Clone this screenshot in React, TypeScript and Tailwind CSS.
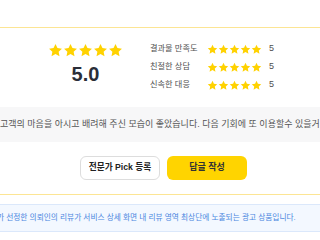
// 리뷰 상세 카드 (별점 요약 + 후기 + 버튼 + 광고 안내)

function Star({ size }: { size: number }) {
  return (
    <svg width={size} height={size} viewBox="0 0 24 24" className="shrink-0">
      <path
        d="M12 1.5l3.1 6.6 7.2.9-5.3 5 1.4 7.1L12 17.6l-6.4 3.5 1.4-7.1-5.3-5 7.2-.9z"
        fill="#FFD200"
      />
    </svg>
  )
}

function Stars({ size, pitch }: { size: number; pitch: number }) {
  return (
    <div className="flex" style={{ gap: pitch - size }}>
      {[0, 1, 2, 3, 4].map((i) => (
        <Star key={i} size={size} />
      ))}
    </div>
  )
}

export default function App() {
  const scores = [
    { label: '결과물 만족도', value: 5 },
    { label: '친절한 상담', value: 5 },
    { label: '신속한 대응', value: 5 },
  ]

  return (
    <div
      className="w-[320px] h-[240px] overflow-hidden bg-white"
      style={{ fontFamily: "'Liberation Sans', 'Noto Sans CJK KR', sans-serif" }}
    >
      <div className="h-[27px]" />
      <div className="h-px bg-[#fce594]" />

      {/* 별점 요약 */}
      <div className="flex pt-[15px] pl-[48px]">
        <div className="flex flex-col items-center w-[75px]">
          <Stars size={15} pitch={14.5} />
          <p className="text-[20px] font-bold text-[#2a2e38] leading-none mt-[6px]">5.0</p>
        </div>
        <div className="ml-[27px] flex flex-col gap-[6px]">
          {scores.map((s) => (
            <div key={s.label} className="flex items-center h-[12px]">
              <span className="w-[57px] text-[8.2px] text-[#505050] whitespace-nowrap">{s.label}</span>
              <Stars size={11} pitch={10} />
              <span className="ml-[7px] text-[9px] text-[#505050]">{s.value}</span>
            </div>
          ))}
        </div>
      </div>

      {/* 후기 본문 */}
      <div className="mt-[16px] h-[35px] bg-[#f7f7f8] flex items-center overflow-hidden">
        <p className="text-[9px] text-[#555] whitespace-nowrap">
          고객의 마음을 아시고 배려해 주신 모습이 좋았습니다. 다음 기회에 또 이용할수 있을거 같아요.
        </p>
      </div>

      {/* 버튼 */}
      <div className="flex gap-[7px] pl-[80px] mt-[14px]">
        <button className="w-[80px] h-[24px] rounded-[6px] border border-[#dddddd] bg-white text-[8.7px] font-semibold text-[#222]">
          전문가 Pick 등록
        </button>
        <button className="w-[80px] h-[24px] rounded-[6px] bg-[#FFD400] text-[9px] font-semibold text-[#333]">
          답글 작성
        </button>
      </div>

      <div className="mt-[14px] h-px bg-[#fce594]" />

      {/* 광고 안내 */}
      <div className="mt-[9px] h-[28px] bg-[#f3f8ff] border-y border-[#dbe8fb] flex items-center overflow-hidden">
        <p className="-ml-[3px] text-[7.7px] text-[#4a86e0] whitespace-nowrap">
          가 선정한 의뢰인의 리뷰가 서비스 상세 화면 내 리뷰 영역 최상단에 노출되는 광고 상품입니다.
        </p>
      </div>
    </div>
  )
}
